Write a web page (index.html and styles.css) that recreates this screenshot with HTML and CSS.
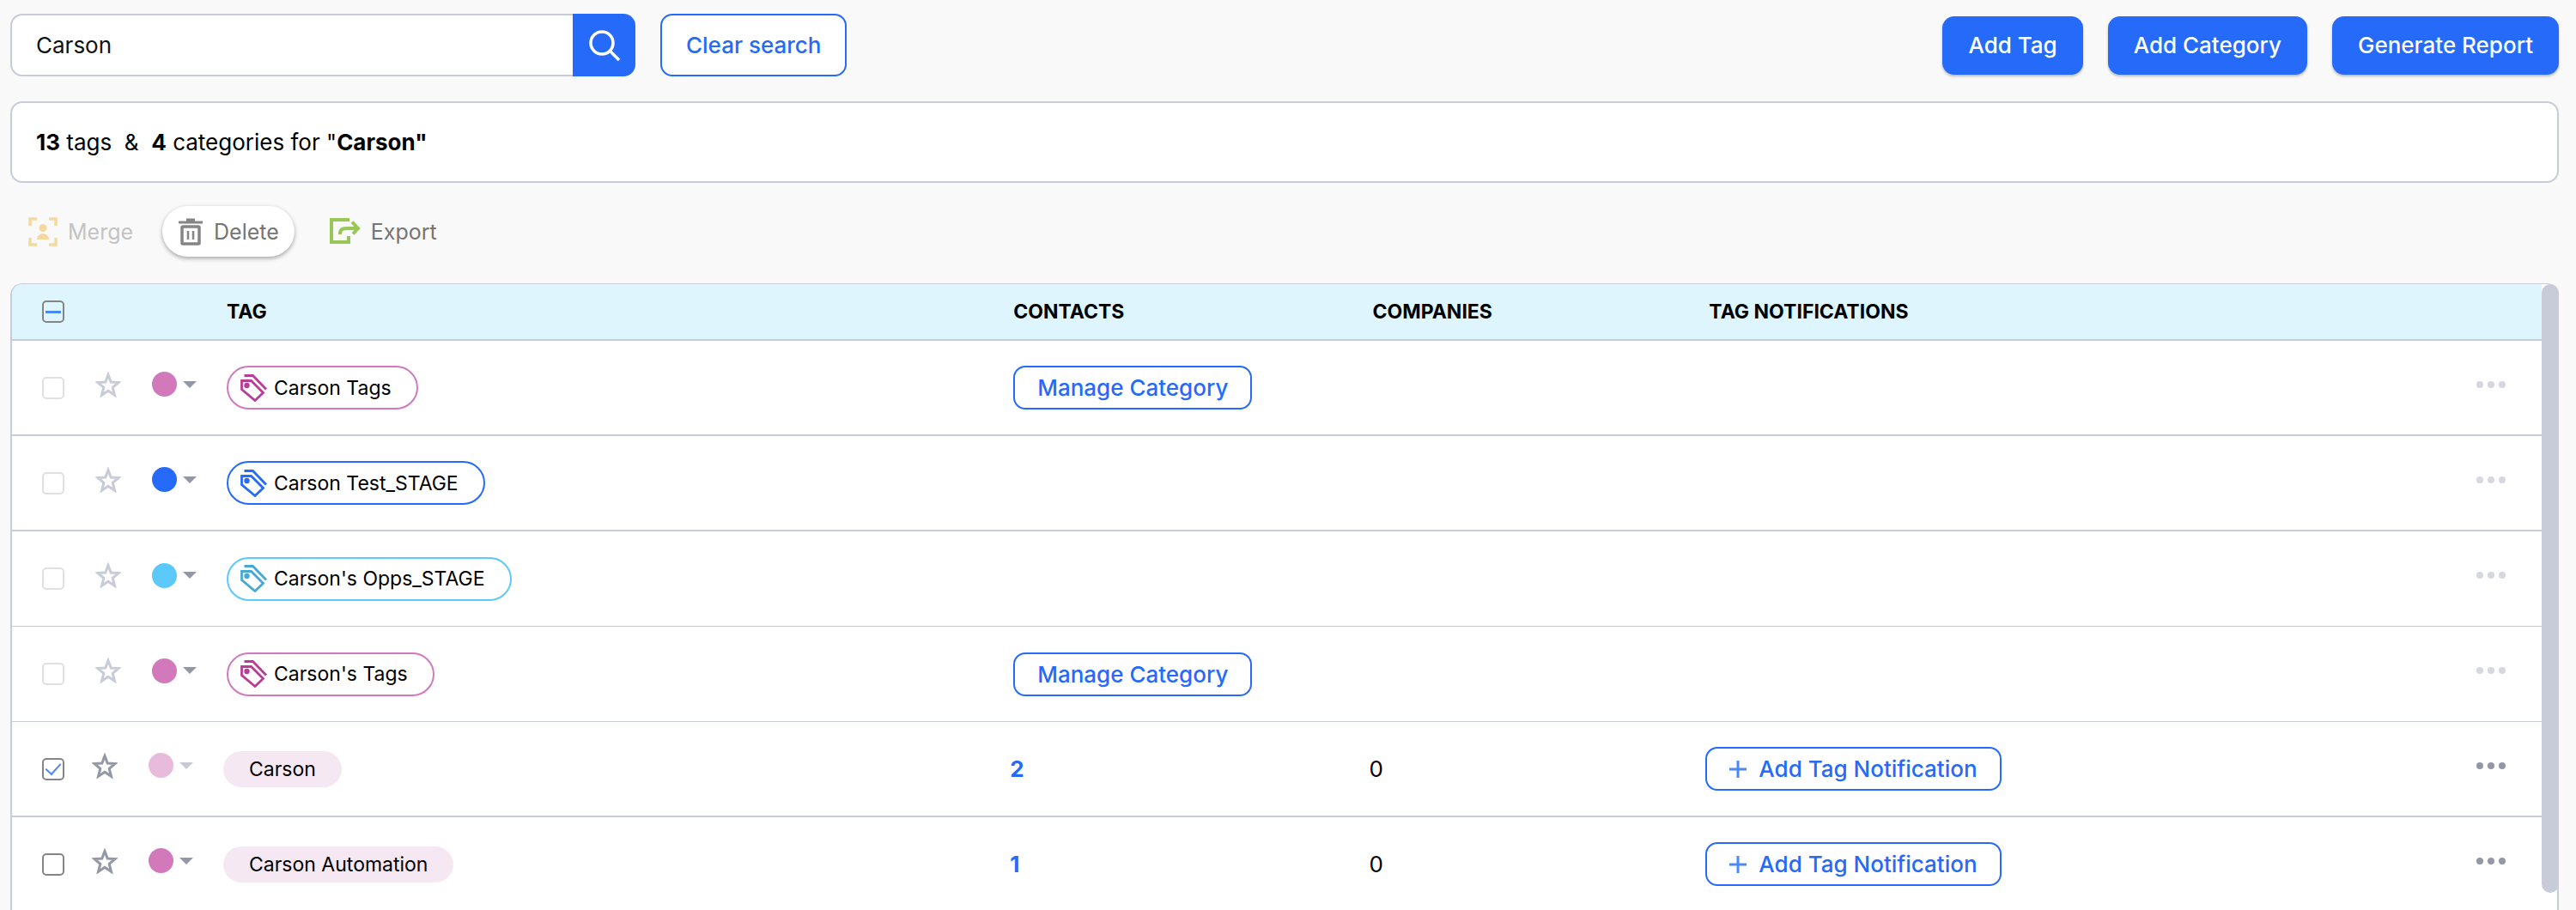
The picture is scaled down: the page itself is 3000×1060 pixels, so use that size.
FILE: index.html
```html
<!DOCTYPE html>
<html lang="en">
<head>
    <meta charset="UTF-8">
    <meta name="viewport" content="width=device-width, initial-scale=1.0">
    <title>Tags</title>
    <link rel="stylesheet" href="styles.css">
</head>
<body>
    <svg class="sprite" aria-hidden="true">
        <symbol id="star" viewBox="0 0 30 30">
            <path d="M15 3.500l3.200 8.500 8.800.6-6.800 5.700 2.300 9-7.500-5-7.500 5 2.300-9L3 12.600l8.800-.6z" fill="none" stroke="currentColor" stroke-width="3"/>
        </symbol>
        <symbol id="tags" viewBox="0 0 32 32">
            <path d="M1.500 7.500h11l14 14-9.500 9-15.500-13z" fill="none" stroke="currentColor" stroke-width="2.800"/>
            <path d="M4.500 1.500h10L30 17.500" fill="none" stroke="currentColor" stroke-width="2.800"/>
            <circle cx="7.500" cy="13" r="3.200" fill="currentColor"/>
        </symbol>
        <symbol id="dots" viewBox="0 0 34 8">
            <circle cx="4" cy="4" r="4" fill="currentColor"/>
            <circle cx="17" cy="4" r="4" fill="currentColor"/>
            <circle cx="30" cy="4" r="4" fill="currentColor"/>
        </symbol>
        <symbol id="plus" viewBox="0 0 20 20">
            <path d="M10 0v20M0 10h20" fill="none" stroke="currentColor" stroke-width="3"/>
        </symbol>
    </svg>

    <header class="topbar">
        <form class="search">
            <input type="text" class="search-input" aria-label="Search tags" value="Carson">
            <button type="button" class="search-btn" aria-label="Search">
                <svg width="38" height="38" viewBox="0 0 38 38">
                    <circle cx="16" cy="16" r="13" fill="none" stroke="#fff" stroke-width="3.500"/>
                    <path d="M25 25l11 11" stroke="#fff" stroke-width="3.500"/>
                </svg>
            </button>
        </form>
        <button type="button" class="btn btn-outline">Clear search</button>
        <div class="actions">
            <button type="button" class="btn btn-primary">Add Tag</button>
            <button type="button" class="btn btn-primary">Add Category</button>
            <button type="button" class="btn btn-primary">Generate Report</button>
        </div>
    </header>

    <div class="summary"><b>13</b> tags &nbsp;&amp; &nbsp;<b>4</b> categories for "<b>Carson"</b></div>

    <div class="toolbar">
        <button type="button" class="tool" disabled>
            <svg width="34" height="34" viewBox="0 0 34 34">
                <path d="M2 10V2h8M24 2h8v8M32 24v8h-8M10 32H2v-8" fill="none" stroke="#f0a818" stroke-width="3.500"/>
                <circle cx="17" cy="12.500" r="4.500" fill="#f0a818"/>
                <path d="M10 26c0-9 14-9 14 0z" fill="#f0a818"/>
            </svg>
            Merge
        </button>
        <button type="button" class="tool tool-active">
            <svg width="30" height="32" viewBox="0 0 30 32">
                <path d="M1 5h28M10 2h10" stroke="#858585" stroke-width="3"/>
                <rect x="5" y="10" width="20" height="20" rx="1" fill="none" stroke="#858585" stroke-width="3.500"/>
                <path d="M12 15v10M18 15v10" stroke="#858585" stroke-width="2.500"/>
            </svg>
            Delete
        </button>
        <button type="button" class="tool">
            <svg width="37" height="31" viewBox="0 0 37 31">
                <path d="M24 2H3v26h20v-7" fill="none" stroke="#98c756" stroke-width="4"/>
                <path d="M13 19c0-7 4-7 9-7h12" fill="none" stroke="#98c756" stroke-width="4"/>
                <path d="M27 4.500l7 7.500-6 6.500" fill="none" stroke="#98c756" stroke-width="4"/>
            </svg>
            Export
        </button>
    </div>

    <main class="panel">
        <table class="tags">
            <colgroup>
                <col class="col-check">
                <col class="col-star">
                <col class="col-color">
                <col class="col-tag">
                <col class="col-contacts">
                <col class="col-companies">
                <col>
                <col class="col-more">
            </colgroup>
            <thead>
                <tr>
                    <th class="check"><input type="checkbox" class="box partial" aria-label="Select all"></th>
                    <th></th>
                    <th></th>
                    <th>TAG</th>
                    <th>CONTACTS</th>
                    <th>COMPANIES</th>
                    <th>TAG NOTIFICATIONS</th>
                    <th></th>
                </tr>
            </thead>
            <tbody>
                <tr class="category pink">
                    <td class="check"><input type="checkbox" class="box" aria-label="Select Carson Tags" disabled></td>
                    <td class="raised"><button type="button" class="icon-btn star" aria-label="Favorite"><svg width="30" height="30"><use href="#star"/></svg></button></td>
                    <td class="raised"><button type="button" class="icon-btn color" aria-label="Color"><span class="swatch"></span><span class="caret"></span></button></td>
                    <td><span class="pill"><svg width="32" height="32"><use href="#tags"/></svg>Carson Tags</span></td>
                    <td><button type="button" class="btn-small">Manage Category</button></td>
                    <td></td>
                    <td></td>
                    <td class="raised last"><button type="button" class="icon-btn more" aria-label="More"><svg width="34" height="8"><use href="#dots"/></svg></button></td>
                </tr>
                <tr class="category blue">
                    <td class="check"><input type="checkbox" class="box" aria-label="Select Carson Test_STAGE" disabled></td>
                    <td class="raised"><button type="button" class="icon-btn star" aria-label="Favorite"><svg width="30" height="30"><use href="#star"/></svg></button></td>
                    <td class="raised"><button type="button" class="icon-btn color" aria-label="Color"><span class="swatch"></span><span class="caret"></span></button></td>
                    <td><span class="pill"><svg width="32" height="32"><use href="#tags"/></svg>Carson Test_STAGE</span></td>
                    <td></td>
                    <td></td>
                    <td></td>
                    <td class="raised last"><button type="button" class="icon-btn more" aria-label="More"><svg width="34" height="8"><use href="#dots"/></svg></button></td>
                </tr>
                <tr class="category sky">
                    <td class="check"><input type="checkbox" class="box" aria-label="Select Carson's Opps_STAGE" disabled></td>
                    <td class="raised"><button type="button" class="icon-btn star" aria-label="Favorite"><svg width="30" height="30"><use href="#star"/></svg></button></td>
                    <td class="raised"><button type="button" class="icon-btn color" aria-label="Color"><span class="swatch"></span><span class="caret"></span></button></td>
                    <td><span class="pill"><svg width="32" height="32"><use href="#tags"/></svg>Carson's Opps_STAGE</span></td>
                    <td></td>
                    <td></td>
                    <td></td>
                    <td class="raised last"><button type="button" class="icon-btn more" aria-label="More"><svg width="34" height="8"><use href="#dots"/></svg></button></td>
                </tr>
                <tr class="category pink">
                    <td class="check"><input type="checkbox" class="box" aria-label="Select Carson's Tags" disabled></td>
                    <td class="raised"><button type="button" class="icon-btn star" aria-label="Favorite"><svg width="30" height="30"><use href="#star"/></svg></button></td>
                    <td class="raised"><button type="button" class="icon-btn color" aria-label="Color"><span class="swatch"></span><span class="caret"></span></button></td>
                    <td><span class="pill"><svg width="32" height="32"><use href="#tags"/></svg>Carson's Tags</span></td>
                    <td><button type="button" class="btn-small">Manage Category</button></td>
                    <td></td>
                    <td></td>
                    <td class="raised last"><button type="button" class="icon-btn more" aria-label="More"><svg width="34" height="8"><use href="#dots"/></svg></button></td>
                </tr>
                <tr class="tag pink">
                    <td class="check"><input type="checkbox" class="box" aria-label="Select Carson" checked></td>
                    <td class="raised"><button type="button" class="icon-btn star" aria-label="Favorite"><svg width="30" height="30"><use href="#star"/></svg></button></td>
                    <td class="raised"><button type="button" class="icon-btn color" aria-label="Color" disabled><span class="swatch"></span><span class="caret"></span></button></td>
                    <td><span class="pill">Carson</span></td>
                    <td><a href="#" class="count">2</a></td>
                    <td>0</td>
                    <td><button type="button" class="btn-small"><svg width="20" height="20"><use href="#plus"/></svg>Add Tag Notification</button></td>
                    <td class="raised last"><button type="button" class="icon-btn more" aria-label="More"><svg width="34" height="8"><use href="#dots"/></svg></button></td>
                </tr>
                <tr class="tag pink">
                    <td class="check"><input type="checkbox" class="box" aria-label="Select Carson Automation"></td>
                    <td class="raised"><button type="button" class="icon-btn star" aria-label="Favorite"><svg width="30" height="30"><use href="#star"/></svg></button></td>
                    <td class="raised"><button type="button" class="icon-btn color" aria-label="Color"><span class="swatch"></span><span class="caret"></span></button></td>
                    <td><span class="pill">Carson Automation</span></td>
                    <td><a href="#" class="count">1</a></td>
                    <td>0</td>
                    <td><button type="button" class="btn-small"><svg width="20" height="20"><use href="#plus"/></svg>Add Tag Notification</button></td>
                    <td class="raised last"><button type="button" class="icon-btn more" aria-label="More"><svg width="34" height="8"><use href="#dots"/></svg></button></td>
                </tr>
            </tbody>
        </table>
        <div class="scrollbar"></div>
    </main>
</body>
</html>
```
FILE: styles.css
```css
* {
    box-sizing: border-box;
}
body {
    display: flex;
    flex-direction: column;
    height: 100vh;
    margin: 0;
    padding: 16px 20px 0 12px;
    overflow: hidden;
    background-color: #f9f9f9;
    color: #000;
    font-family: Inter, "Liberation Sans", sans-serif;
    font-size: 26px;
}
button, input {
    font-family: inherit;
    font-size: inherit;
}
button {
    cursor: pointer;
}
.sprite {
    display: none;
}

/* top bar */
.topbar {
    display: flex;
    align-items: center;
    flex-shrink: 0;
}
.search {
    display: flex;
    width: 728px;
    height: 73px;
    margin-right: 29px;
}
.search-input {
    flex: 1;
    min-width: 0;
    padding: 0 28px;
    border: 2px solid #c8ccd8;
    border-right: none;
    border-radius: 14px 0 0 14px;
    background-color: #fff;
    color: #111;
}
.search-btn {
    display: flex;
    align-items: center;
    justify-content: center;
    width: 73px;
    padding: 0;
    border: none;
    border-radius: 0 14px 14px 0;
    background-color: #256af8;
}
.btn {
    height: 68px;
    padding: 0 30px;
    border-radius: 14px;
    font-weight: 500;
}
.btn-outline {
    height: 73px;
    padding: 0 28px;
    border: 2px solid #256af8;
    background-color: #fff;
    color: #256af8;
}
.btn-primary {
    border: none;
    background-color: #256af8;
    color: #fff;
    box-shadow: 0 2px 3px rgba(0, 0, 0, 0.25);
}
.actions {
    display: flex;
    gap: 29px;
    margin-left: auto;
}

.summary {
    flex-shrink: 0;
    margin-top: 29px;
    padding: 0 28px;
    border: 2px solid #c8ccd8;
    border-radius: 14px;
    background-color: #fff;
    line-height: 91px;
}

/* toolbar */
.toolbar {
    display: flex;
    align-items: center;
    flex-shrink: 0;
    gap: 19px;
    margin: 27px 0 31px;
}
.tool {
    display: flex;
    align-items: center;
    gap: 12px;
    height: 59px;
    padding: 0 15px 0 21px;
    border: none;
    border-radius: 30px;
    background: none;
    color: #757575;
    font-size: 25px;
}
.tool:disabled {
    opacity: 0.4;
}
.tool-active {
    padding: 0 18px;
    background-color: #fff;
    box-shadow: 0 2px 5px rgba(0, 0, 0, 0.35);
}

/* table */
.panel {
    position: relative;
    flex: 1;
    min-height: 0;
    padding-right: 18px;
    border: 2px solid #c8ccd8;
    border-width: 1px 2px 0;
    border-radius: 14px 14px 0 0;
    background-color: #fff;
}
.scrollbar {
    position: absolute;
    top: 0;
    right: -2px;
    bottom: 20px;
    width: 20px;
    border-radius: 10px;
    background-color: #c8ccd8;
}
.tags {
    width: 100%;
    border-collapse: separate;
    border-spacing: 0;
    table-layout: fixed;
}
.col-check {
    width: 83px;
}
.col-star {
    width: 66px;
}
.col-color {
    width: 87px;
}
.col-tag {
    width: 31.1%;
}
.col-contacts {
    width: 14.2%;
}
.col-companies {
    width: 13.3%;
}
.col-more {
    width: 90px;
}
th, td {
    padding: 0 0 0 14px;
    border-bottom: 2px solid #c8ccd8;
    text-align: left;
    vertical-align: middle;
}
th {
    height: 66px;
    background-color: #dff5fe;
    font-size: 23px;
    font-weight: 700;
}
th:first-child {
    border-top-left-radius: 12px;
}
td {
    height: 111px;
}
.tag td {
    padding-left: 10px;
}
.tag .last {
    padding-left: 14px;
}
tr:nth-child(3) td, tr:nth-child(4) td {
    border-bottom-width: 1px;
}
th.check, .category .check, .tag .check {
    padding-left: 35px;
    line-height: 0;
}
td.raised {
    padding-bottom: 8px;
}

.box {
    display: inline-flex;
    align-items: center;
    justify-content: center;
    width: 26px;
    height: 26px;
    margin: 0;
    appearance: none;
    border: 2px solid #858585;
    border-radius: 5px;
    background-color: #fff;
}
.box:disabled {
    border-color: #e0e0e0;
}
.partial {
    background-color: transparent;
}
.partial::before {
    content: "";
    width: 18px;
    height: 3px;
    background-color: #4a8af8;
}
.box:checked::before {
    content: "";
    width: 8px;
    height: 15px;
    margin-bottom: 4px;
    border: solid #4a8af8;
    border-width: 0 2px 2px 0;
    transform: rotate(42deg);
}

.icon-btn {
    display: flex;
    align-items: center;
    padding: 0;
    border: none;
    background: none;
}
.star, .more {
    color: #9298a5;
}
.category .star {
    color: #c8ccd8;
}
.category .more {
    color: #d5d8e0;
}
.color {
    gap: 7px;
}
.color:disabled {
    opacity: 0.5;
}
.swatch {
    width: 29px;
    height: 29px;
    border-radius: 50%;
    background-color: #256af8;
}
.pink .swatch {
    background-color: #d279bc;
}
.sky .swatch {
    background-color: #5bcafa;
}
.caret {
    border: 8px solid transparent;
    border-top-color: #9298a5;
    border-bottom: none;
}

.pill {
    display: inline-flex;
    align-items: center;
    height: 42px;
    padding: 0 30px;
    border-radius: 26px;
    background-color: #f6e8f3;
    font-size: 23px;
}
.category .pill {
    gap: 7px;
    height: 51px;
    padding: 0 29px 0 14px;
    border: 2px solid #256af8;
    background-color: #fff;
}
.category .pill svg {
    color: #256af8;
}
.category.pink .pill {
    border-color: #d279bc;
}
.category.pink .pill svg {
    color: #b93c97;
}
.category.sky .pill {
    border-color: #5bcafa;
}
.category.sky .pill svg {
    color: #48a8d5;
}

.btn-small {
    display: inline-flex;
    align-items: center;
    gap: 14px;
    height: 51px;
    padding: 0 26px;
    border: 2px solid #256af8;
    border-radius: 14px;
    background-color: #fff;
    color: #256af8;
    font-weight: 500;
}
.btn-small svg {
    color: #4a8af8;
}
.count {
    color: #256af8;
    font-weight: 700;
    text-decoration: none;
}
```
